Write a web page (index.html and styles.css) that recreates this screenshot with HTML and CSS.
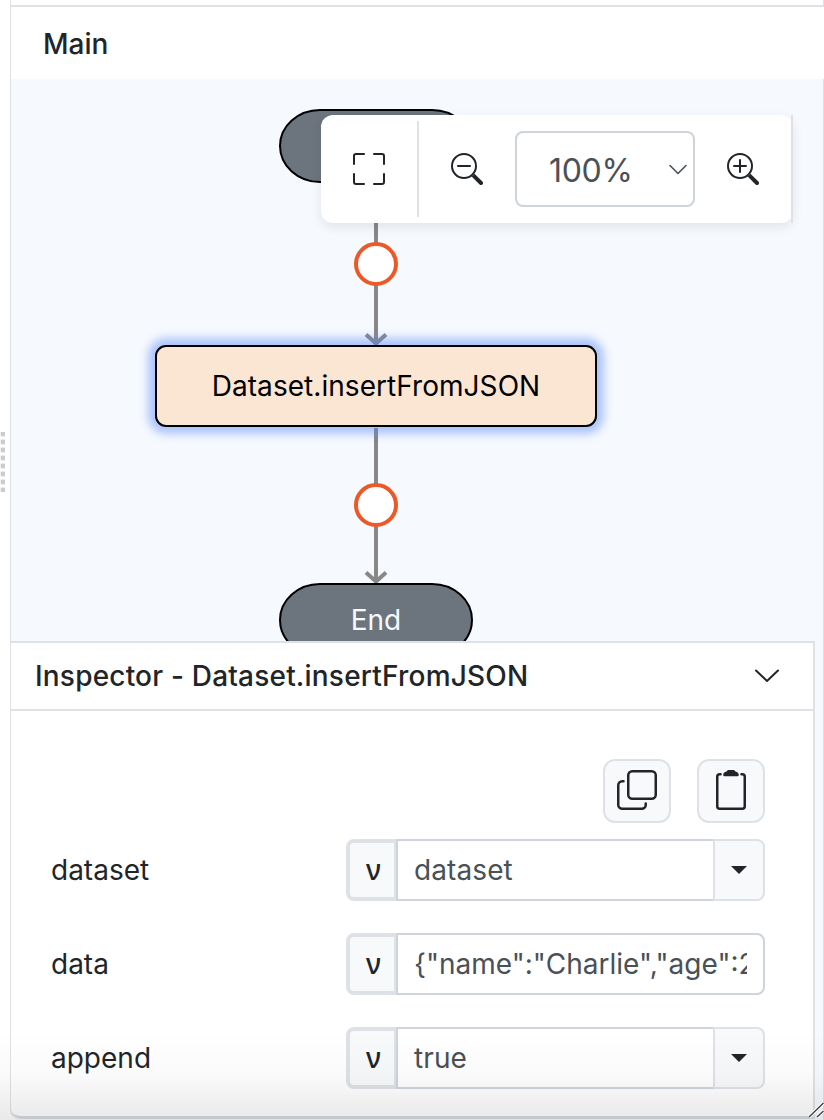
FILE: index.html
```html
<!DOCTYPE html>
<html lang="en">
<head>
<meta charset="utf-8">
<title>Main</title>
<link rel="stylesheet" href="styles.css">
</head>
<body>
<div class="app">
  <div class="splitter"><div class="grip"></div></div>
  <div class="panel">
    <header class="panel-head">Main</header>
    <main class="canvas">
      <svg class="flow" width="812" height="562" viewBox="11 79 812 562">
        <rect x="280" y="110" width="192" height="72" rx="40" ry="36" fill="#6c757d" stroke="#000" stroke-width="2"/>
        <g stroke="#888" stroke-width="4" fill="none">
          <path d="M376 183V343M366 334.500l10 9 10-9M376 428V581M366 572.500l10 9 10-9"/>
        </g>
        <g fill="#fff" stroke="#ed5829" stroke-width="4">
          <circle cx="376" cy="264" r="20"/>
          <circle cx="376" cy="505" r="20"/>
        </g>
        <rect x="280" y="584" width="192" height="72" rx="40" ry="36" fill="#6c757d" stroke="#000" stroke-width="2"/>
      </svg>
      <div class="node">Dataset.insertFromJSON</div>
      <div class="end-label">End</div>
      <div class="toolbar">
        <button class="tool fit"><svg width="32" height="32" viewBox="0 0 16 16" fill="currentColor"><path d="M1.500 1a.5.5 0 0 0-.5.5v4a.5.5 0 0 1-1 0v-4A1.500 1.500 0 0 1 1.500 0h4a.5.5 0 0 1 0 1zM10 .5a.5.5 0 0 1 .5-.5h4A1.500 1.500 0 0 1 16 1.500v4a.5.5 0 0 1-1 0v-4a.5.5 0 0 0-.5-.5h-4a.5.5 0 0 1-.5-.5M.5 10a.5.5 0 0 1 .5.5v4a.5.5 0 0 0 .5.5h4a.5.5 0 0 1 0 1h-4A1.500 1.500 0 0 1 0 14.500v-4a.5.5 0 0 1 .5-.5m15 0a.5.5 0 0 1 .5.5v4a1.500 1.500 0 0 1-1.500 1.500h-4a.5.5 0 0 1 0-1h4a.5.5 0 0 0 .5-.5v-4a.5.5 0 0 1 .5-.5"/></svg></button>
        <button class="tool out"><svg width="32" height="32" viewBox="0 0 16 16" fill="currentColor"><path fill-rule="evenodd" d="M6.500 12a5.500 5.500 0 1 0 0-11 5.500 5.500 0 0 0 0 11M13 6.500a6.500 6.500 0 1 1-13 0 6.500 6.500 0 0 1 13 0"/><path d="M10.344 11.742q.044.060.098.115l3.850 3.850a1 1 0 0 0 1.415-1.414l-3.850-3.850a1 1 0 0 0-.115-.1 6.500 6.500 0 0 1-1.398 1.400z"/><path d="M3 6.500a.5.5 0 0 1 .5-.5h6a.5.5 0 0 1 0 1h-6a.5.5 0 0 1-.5-.5"/></svg></button>
        <div class="zoom"><span>100%</span><svg width="18" height="12" viewBox="0 0 18 12"><path d="M1 1.500 9 9.500 17 1.500" fill="none" stroke="#495057" stroke-width="1.600" stroke-linecap="round" stroke-linejoin="round"/></svg></div>
        <button class="tool in"><svg width="32" height="32" viewBox="0 0 16 16" fill="currentColor"><path fill-rule="evenodd" d="M6.500 12a5.500 5.500 0 1 0 0-11 5.500 5.500 0 0 0 0 11M13 6.500a6.500 6.500 0 1 1-13 0 6.500 6.500 0 0 1 13 0"/><path d="M10.344 11.742q.044.060.098.115l3.850 3.850a1 1 0 0 0 1.415-1.414l-3.850-3.850a1 1 0 0 0-.115-.1 6.500 6.500 0 0 1-1.398 1.400z"/><path d="M6.500 3a.5.5 0 0 1 .5.5V6h2.500a.5.5 0 0 1 0 1H7v2.500a.5.5 0 0 1-1 0V7H3.500a.5.5 0 0 1 0-1H6V3.500a.5.5 0 0 1 .5-.5"/></svg></button>
      </div>
    </main>
    <section class="inspector">
      <div class="inspector-head"><span>Inspector - Dataset.insertFromJSON</span>
        <svg width="24" height="14" viewBox="0 0 24 14"><path d="M1 1.500 12 12 23 1.500" fill="none" stroke="#212529" stroke-width="2" stroke-linecap="round" stroke-linejoin="round"/></svg>
      </div>
      <div class="inspector-body">
        <div class="actions">
          <button class="action"><svg width="40" height="40" viewBox="0 0 40 40" fill="none" stroke="#212529" stroke-width="2.500" stroke-linecap="round"><rect x="11.250" y="1.250" width="27.500" height="27.500" rx="4"/><path d="M6.500 11.250H5.250a4 4 0 0 0-4 4V34.750a4 4 0 0 0 4 4H24.750a4 4 0 0 0 4-4V33.500"/></svg></button>
          <button class="action"><svg width="40" height="40" viewBox="0 0 40 40" fill="none" stroke="#212529" stroke-width="2.500" stroke-linecap="round"><path d="M9.500 4.250H8.750a2.500 2.500 0 0 0-2.500 2.500V36.250a2.500 2.500 0 0 0 2.500 2.500H31.250a2.500 2.500 0 0 0 2.500-2.500V6.750a2.500 2.500 0 0 0-2.500-2.500H30.500"/><path fill="#212529" stroke="none" d="M15.500 1.500C16 .6 16.800 0 17.800 0h4.400c1 0 1.800.6 2.300 1.500 2 .3 3.300 1.800 3.300 3.500 0 .7-.5 1.200-1.200 1.200H13.400c-.7 0-1.200-.5-1.200-1.200 0-1.700 1.300-3.200 3.300-3.500z"/></svg></button>
        </div>
        <div class="row"><label>dataset</label><div class="group"><span class="addon">ν</span><div class="field">dataset</div><span class="drop"></span></div></div>
        <div class="row"><label>data</label><div class="group"><span class="addon">ν</span><div class="field last"><div class="clip">{"name":"Charlie","age":2</div></div></div></div>
        <div class="row"><label>append</label><div class="group"><span class="addon">ν</span><div class="field">true</div><span class="drop"></span></div></div>
      </div>
    </section>
  </div>
  <div class="shade"></div>
  <svg class="resize" width="16" height="16" viewBox="0 0 16 16"><path d="M1 15 15.500 1M9 15l6.500-6.500" stroke="#fff" stroke-width="3.500"/><path d="M1 15 15.500 1M9 15l6.500-6" stroke="#444" stroke-width="1.500"/></svg>
</div>
</body>
</html>
```
FILE: styles.css
```css
* { box-sizing: border-box; }
body {
  margin: 0;
  background: #fff;
  color: #212529;
  font: 28px/40px Inter, "Liberation Sans", sans-serif;
  white-space: nowrap;
}
svg { display: block; flex: none; }
button { padding: 0; border: 0; background: none; color: inherit; display: flex; align-items: center; justify-content: center; }
.app { position: relative; display: flex; width: 824px; height: 1120px; overflow: hidden; }
.splitter { width: 10px; display: flex; align-items: center; padding-top: 4px; }
.grip {
  width: 5px;
  height: 60px;
  margin-bottom: 200px;
  background:
    linear-gradient(to right, rgba(255, 255, 255, .7) 1px, transparent 1px),
    repeating-linear-gradient(to bottom, #ccc 0 4px, #efefef 4px 5px, #fff 5px 7px, #e8e8e8 7px 8px);
}
.panel {
  width: 814px;
  display: flex;
  flex-direction: column;
  border-left: 1px solid #dee2e6;
  border-right: 1px solid #dee2e6;
  border-bottom-left-radius: 10px;
  padding-top: 5px;
  background: linear-gradient(#fff 0 79px, #f6f9fe 79px);
}
.panel-head { height: 74px; border-top: 2px solid #dee2e6; padding: 17px 32px; font-weight: 500; background: #fff; margin-right: -1px; }
.canvas { position: relative; height: 562px; background: #f6f9fe; }
.node {
  position: absolute; left: 144px; top: 266px; width: 442px; height: 82px;
  border: 2px solid #000; border-radius: 11px; background: #fbe6d4; color: #000;
  box-shadow: 0 0 8px 7px rgba(80, 130, 250, .44);
  display: flex; align-items: center; justify-content: center;
  letter-spacing: .05px;
}
.end-label { position: absolute; left: 268px; top: 521px; width: 194px; text-align: center; color: #f6f9fe; }
.toolbar {
  position: absolute; left: 310px; top: 36px; width: 472px; height: 108px;
  display: flex; align-items: center; background: #fff; border-radius: 12px;
  box-shadow: 0 4px 12px rgba(0, 0, 0, .09);
}
.toolbar::after { content: ""; width: 2px; height: 108px; background: #dee2e6; margin-left: auto; }
.tool { height: 96px; }
.fit { width: 98px; border-right: 2px solid #dee2e6; }
.out { width: 96px; }
.in { width: 96px; }
.zoom {
  width: 180px; height: 76px; border: 2px solid #ced4da; border-radius: 8px; background: #fff;
  display: flex; align-items: center; justify-content: space-between; padding: 1px 6px 0 32px;
  color: #495057; font-size: 32px; letter-spacing: -.3px;
}
.zoom span { padding-top: 2px; }
.inspector { width: 804px; height: 478px; background: #fff; border: 2px solid #dee2e6; border-left: 0; border-bottom: 3px solid #d8dbde; border-bottom-left-radius: 10px; }
.inspector-head { height: 68px; border-bottom: 2px solid #dee2e6; display: flex; align-items: center; justify-content: space-between; padding: 0 34px 0 24px; font-weight: 500; letter-spacing: .2px; }
.inspector-body { padding: 48px 48px 0 40px; display: flex; flex-direction: column; }
.actions { display: flex; justify-content: flex-end; gap: 26px; margin-bottom: 16px; }
.action { width: 68px; height: 64px; border: 2px solid #dee2e6; border-radius: 12px; background: #f8f9fb; padding-bottom: 2px; }
.row { display: flex; justify-content: space-between; align-items: center; height: 62px; margin-bottom: 32px; }
.group { display: flex; width: 419px; height: 62px; color: #495057; }
.addon {
  width: 52px; margin-right: -2px; border: 4px solid #dee2e6; border-radius: 8px 0 0 8px;
  background: #f8f9fb; color: #212529; text-align: center; padding-left: 3px;
  font-family: "Noto Sans", "DejaVu Sans", sans-serif; font-weight: 500; line-height: 53px;
}
.field { flex: 1; min-width: 0; border: 2px solid #ced4da; background: #fff; padding: 9px 16px; letter-spacing: .1px; }
.field.last { border-radius: 0 8px 8px 0; letter-spacing: 0; }
.clip { overflow: hidden; }
.drop { width: 52px; margin-left: -2px; border: 2px solid #dee2e6; border-radius: 0 8px 8px 0; background: #f8f9fb; display: flex; align-items: center; justify-content: center; }
.drop::before { content: ""; border: 8px solid transparent; border-top-color: #212529; border-bottom: 0; }
.shade { position: absolute; left: 0; right: 0; bottom: 0; height: 90px; background: linear-gradient(transparent, rgba(0, 0, 0, .018) 50%, rgba(0, 0, 0, .085)); pointer-events: none; }
.resize { position: absolute; right: 0; bottom: 2px; }
```
